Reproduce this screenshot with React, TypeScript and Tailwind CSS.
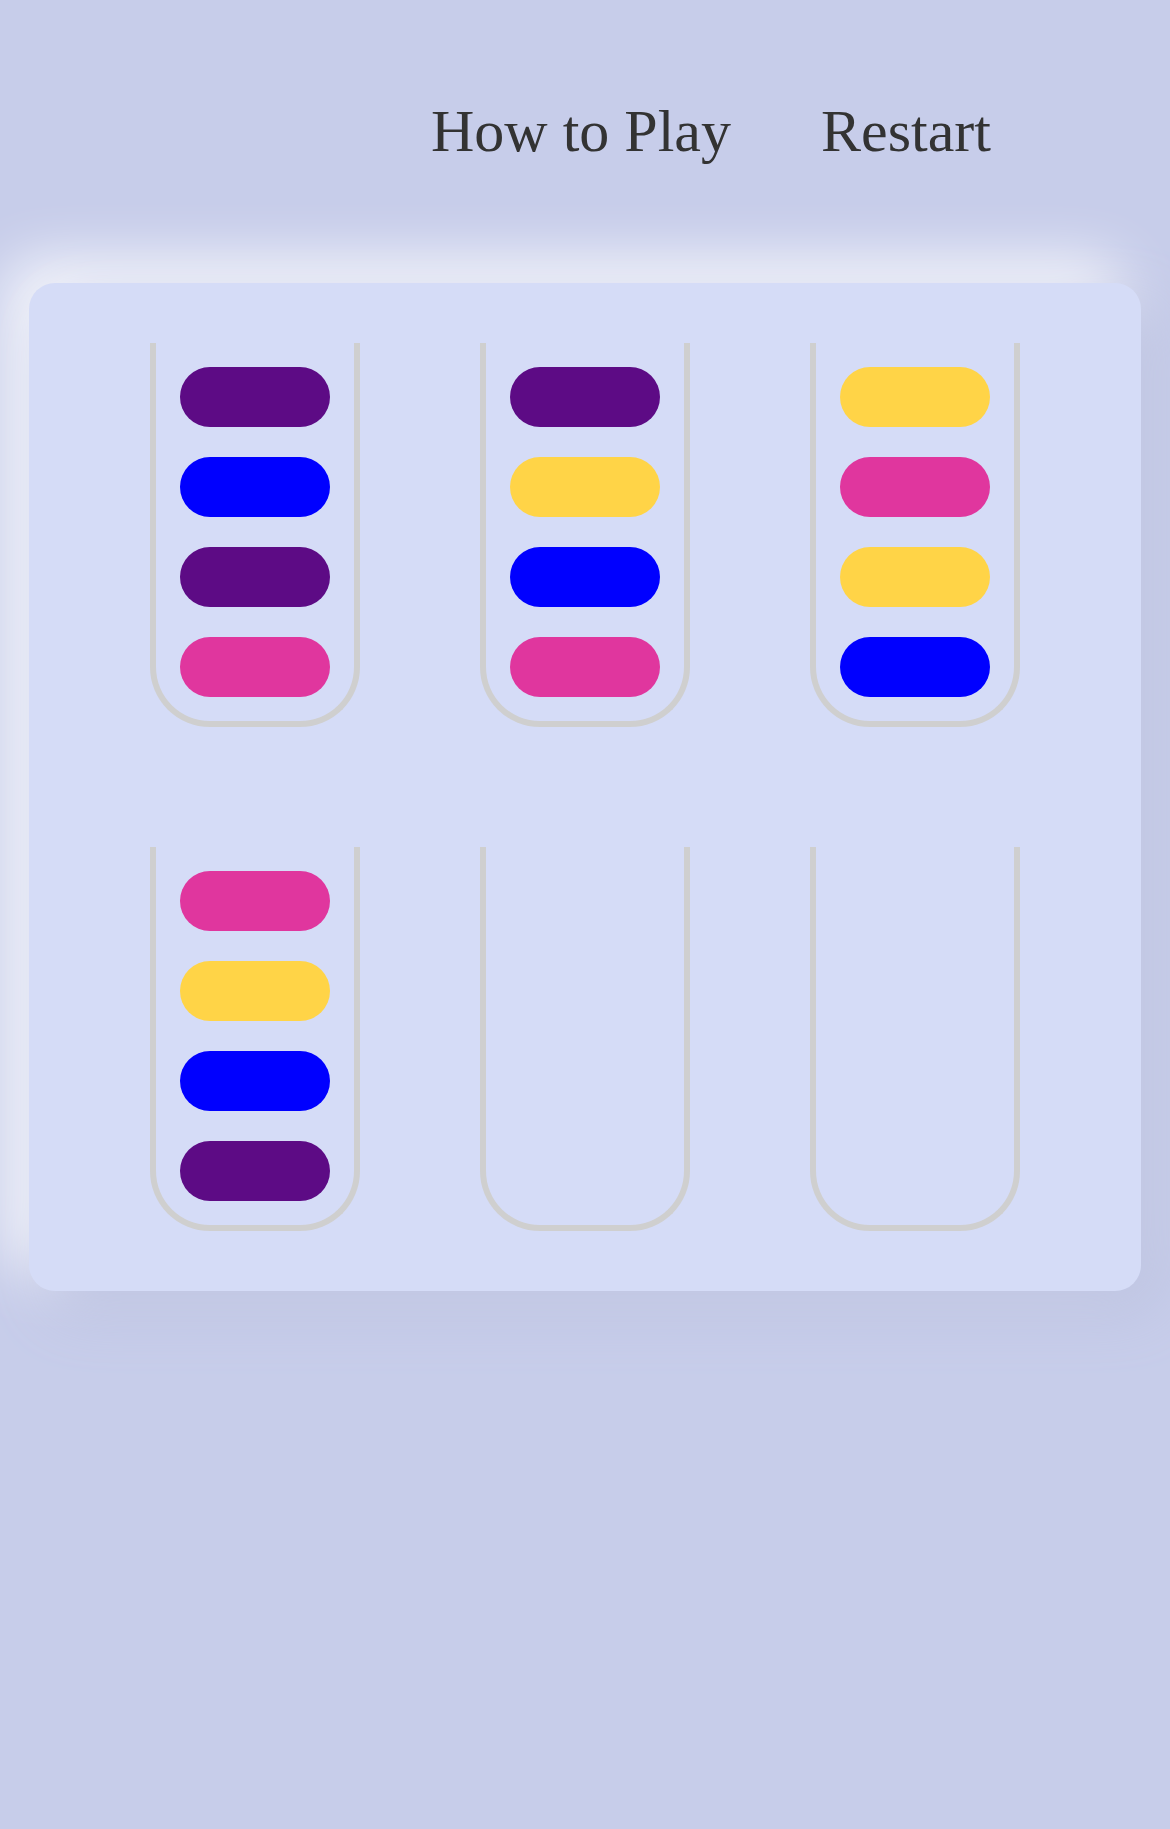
import React from "react";

type Ball = "purple" | "blue" | "yellow" | "pink";

const ballColor: Record<Ball, string> = {
  purple: "bg-[#5d0b85]",
  blue: "bg-[#0000ff]",
  yellow: "bg-[#ffd447]",
  pink: "bg-[#e0369e]",
};

// each tube lists its balls from top to bottom
const tubes: Ball[][] = [
  ["purple", "blue", "purple", "pink"],
  ["purple", "yellow", "blue", "pink"],
  ["yellow", "pink", "yellow", "blue"],
  ["pink", "yellow", "blue", "purple"],
  [],
  [],
];

function Tube({ balls }: { balls: Ball[] }) {
  return (
    <div className="box-border flex h-[384px] w-[210px] flex-col gap-[30px] rounded-b-[60px] border-x-[6px] border-b-[6px] border-t-0 border-solid border-[#cfcfcf] p-[24px]">
      {balls.map((b, i) => (
        <div key={i} className={`h-[60px] w-[150px] shrink-0 rounded-full ${ballColor[b]}`} />
      ))}
    </div>
  );
}

export default function App() {
  return (
    <div className="min-h-[1829px] w-full bg-[#c7cdea] font-['Liberation_Serif','Times_New_Roman',serif] text-[#333333]">
      {/* Header */}
      <div className="flex h-[283px] items-start gap-[90px] pl-[431px] pt-[86px]">
        <button className="cursor-pointer bg-transparent p-0 text-[60px] leading-normal">How to Play</button>
        <button className="cursor-pointer bg-transparent p-0 text-[60px] leading-normal">Restart</button>
      </div>

      {/* Board */}
      <div className="mx-auto box-border flex w-[95%] flex-wrap justify-center gap-[120px] rounded-[26px] bg-[#d5dcf7] p-[60px] shadow-[20px_20px_60px_#bdc3e1,-20px_-20px_60px_#ffffff]">
        {tubes.map((t, i) => (
          <Tube key={i} balls={t} />
        ))}
      </div>
    </div>
  );
}
